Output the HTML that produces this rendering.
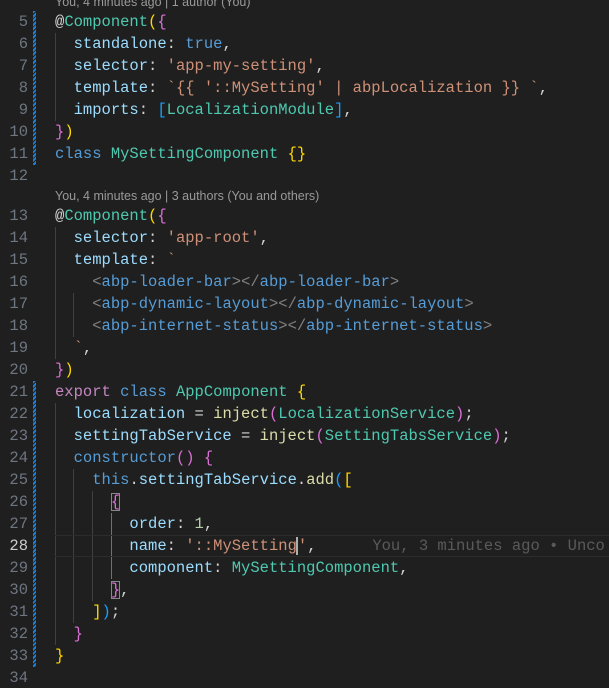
<!DOCTYPE html>
<html><head><meta charset="utf-8"><style>
html,body{margin:0;padding:0;background:#1f1f1f;width:609px;height:688px;overflow:hidden;position:relative}
.l{position:absolute;left:0;width:609px;height:22px;line-height:22px;font-family:"Liberation Mono",monospace;font-size:15.5px;white-space:pre;color:#d4d4d4;overflow:hidden}
.n{position:absolute;left:0;width:28px;text-align:right;color:#6e7681}
.c{position:absolute;left:55px}
.cl{position:absolute;left:55px;height:18px;line-height:18px;font-family:"Liberation Sans",sans-serif;font-size:12.5px;color:#999;white-space:pre}
.g{position:absolute;width:1px;background:#404040}
.k{color:#569cd6}.p{color:#9cdcfe}.s{color:#ce9178}.t{color:#4ec9b0}.f{color:#dcdcaa}.x{color:#c586c0}.nm{color:#b5cea8}.gr{color:#808080}
.y{color:#ffd700}.o{color:#da70d6}.b{color:#179fff}
.box{outline:1px solid #888;outline-offset:-1px}
.stripe{position:absolute;left:33px;width:3px;background:repeating-linear-gradient(135deg,#1b81d8 0 2px,#1f1f1f 2px 3px)}
</style></head><body>
<div class="stripe" style="top:11px;height:154px"></div>
<div class="stripe" style="top:381px;height:286px"></div>
<div class="g" style="left:55px;top:33px;height:88px"></div>
<div class="g" style="left:55px;top:227px;height:132px"></div>
<div class="g" style="left:73px;top:293px;height:44px"></div>
<div class="g" style="left:55px;top:403px;height:242px"></div>
<div class="g" style="left:73px;top:469px;height:154px"></div>
<div class="g" style="left:92px;top:491px;height:110px"></div>
<div class="g" style="left:111px;top:513px;height:66px;background:#707070"></div>
<div style="position:absolute;left:55px;top:535px;width:554px;height:20px;border-top:1px solid #2c2c2c;border-bottom:1px solid #2c2c2c"></div>
<div class="cl" style="top:-7px">You, 4 minutes ago | 1 author (You)</div>
<div class="l" style="top:11px"><span class="n">5</span><span class="c">@<span class="t">Component</span><span class="y">(</span><span class="o">{</span></span></div>
<div class="l" style="top:33px"><span class="n">6</span><span class="c">  <span class="p">standalone</span>: <span class="k">true</span>,</span></div>
<div class="l" style="top:55px"><span class="n">7</span><span class="c">  <span class="p">selector</span>: <span class="s">'app-my-setting'</span>,</span></div>
<div class="l" style="top:77px"><span class="n">8</span><span class="c">  <span class="p">template</span>: <span class="s">`{{ '::MySetting' | abpLocalization }} `</span>,</span></div>
<div class="l" style="top:99px"><span class="n">9</span><span class="c">  <span class="p">imports</span>: <span class="b">[</span><span class="t">LocalizationModule</span><span class="b">]</span>,</span></div>
<div class="l" style="top:121px"><span class="n">10</span><span class="c"><span class="o">}</span><span class="y">)</span></span></div>
<div class="l" style="top:143px"><span class="n">11</span><span class="c"><span class="k">class</span> <span class="t">MySettingComponent</span> <span class="y">{}</span></span></div>
<div class="l" style="top:165px"><span class="n">12</span></div>
<div class="cl" style="top:187px">You, 4 minutes ago | 3 authors (You and others)</div>
<div class="l" style="top:205px"><span class="n">13</span><span class="c">@<span class="t">Component</span><span class="y">(</span><span class="o">{</span></span></div>
<div class="l" style="top:227px"><span class="n">14</span><span class="c">  <span class="p">selector</span>: <span class="s">'app-root'</span>,</span></div>
<div class="l" style="top:249px"><span class="n">15</span><span class="c">  <span class="p">template</span>: <span class="s">`</span></span></div>
<div class="l" style="top:271px"><span class="n">16</span><span class="c">    <span class="gr">&lt;</span><span class="k">abp-loader-bar</span><span class="gr">&gt;&lt;/</span><span class="k">abp-loader-bar</span><span class="gr">&gt;</span></span></div>
<div class="l" style="top:293px"><span class="n">17</span><span class="c">    <span class="gr">&lt;</span><span class="k">abp-dynamic-layout</span><span class="gr">&gt;&lt;/</span><span class="k">abp-dynamic-layout</span><span class="gr">&gt;</span></span></div>
<div class="l" style="top:315px"><span class="n">18</span><span class="c">    <span class="gr">&lt;</span><span class="k">abp-internet-status</span><span class="gr">&gt;&lt;/</span><span class="k">abp-internet-status</span><span class="gr">&gt;</span></span></div>
<div class="l" style="top:337px"><span class="n">19</span><span class="c">  <span class="s">`</span>,</span></div>
<div class="l" style="top:359px"><span class="n">20</span><span class="c"><span class="o">}</span><span class="y">)</span></span></div>
<div class="l" style="top:381px"><span class="n">21</span><span class="c"><span class="x">export</span> <span class="k">class</span> <span class="t">AppComponent</span> <span class="y">{</span></span></div>
<div class="l" style="top:403px"><span class="n">22</span><span class="c">  <span class="p">localization</span> = <span class="f">inject</span><span class="o">(</span><span class="t">LocalizationService</span><span class="o">)</span>;</span></div>
<div class="l" style="top:425px"><span class="n">23</span><span class="c">  <span class="p">settingTabService</span> = <span class="f">inject</span><span class="o">(</span><span class="t">SettingTabsService</span><span class="o">)</span>;</span></div>
<div class="l" style="top:447px"><span class="n">24</span><span class="c">  <span class="k">constructor</span><span class="o">()</span> <span class="o">{</span></span></div>
<div class="l" style="top:469px"><span class="n">25</span><span class="c">    <span class="k">this</span>.<span class="p">settingTabService</span>.<span class="f">add</span><span class="b">(</span><span class="y">[</span></span></div>
<div class="l" style="top:491px"><span class="n">26</span><span class="c">      <span class="o box">{</span></span></div>
<div class="l" style="top:513px"><span class="n">27</span><span class="c">        <span class="p">order</span>: <span class="nm">1</span>,</span></div>
<div class="l" style="top:535px"><span class="n" style="color:#ccc">28</span><span class="c">        <span class="p">name</span>: <span class="s">'::MySetting</span><span style="border-left:2px solid #aeafad;margin-left:-1px"></span><span class="s">'</span>,      <span style="color:#5a5a5a">You, 3 minutes ago • Unco</span></span></div>
<div class="l" style="top:557px"><span class="n">29</span><span class="c">        <span class="p">component</span>: <span class="t">MySettingComponent</span>,</span></div>
<div class="l" style="top:579px"><span class="n">30</span><span class="c">      <span class="o box">}</span>,</span></div>
<div class="l" style="top:601px"><span class="n">31</span><span class="c">    <span class="y">]</span><span class="b">)</span>;</span></div>
<div class="l" style="top:623px"><span class="n">32</span><span class="c">  <span class="o">}</span></span></div>
<div class="l" style="top:645px"><span class="n">33</span><span class="c"><span class="y">}</span></span></div>
<div class="l" style="top:667px"><span class="n">34</span></div>
</body></html>
